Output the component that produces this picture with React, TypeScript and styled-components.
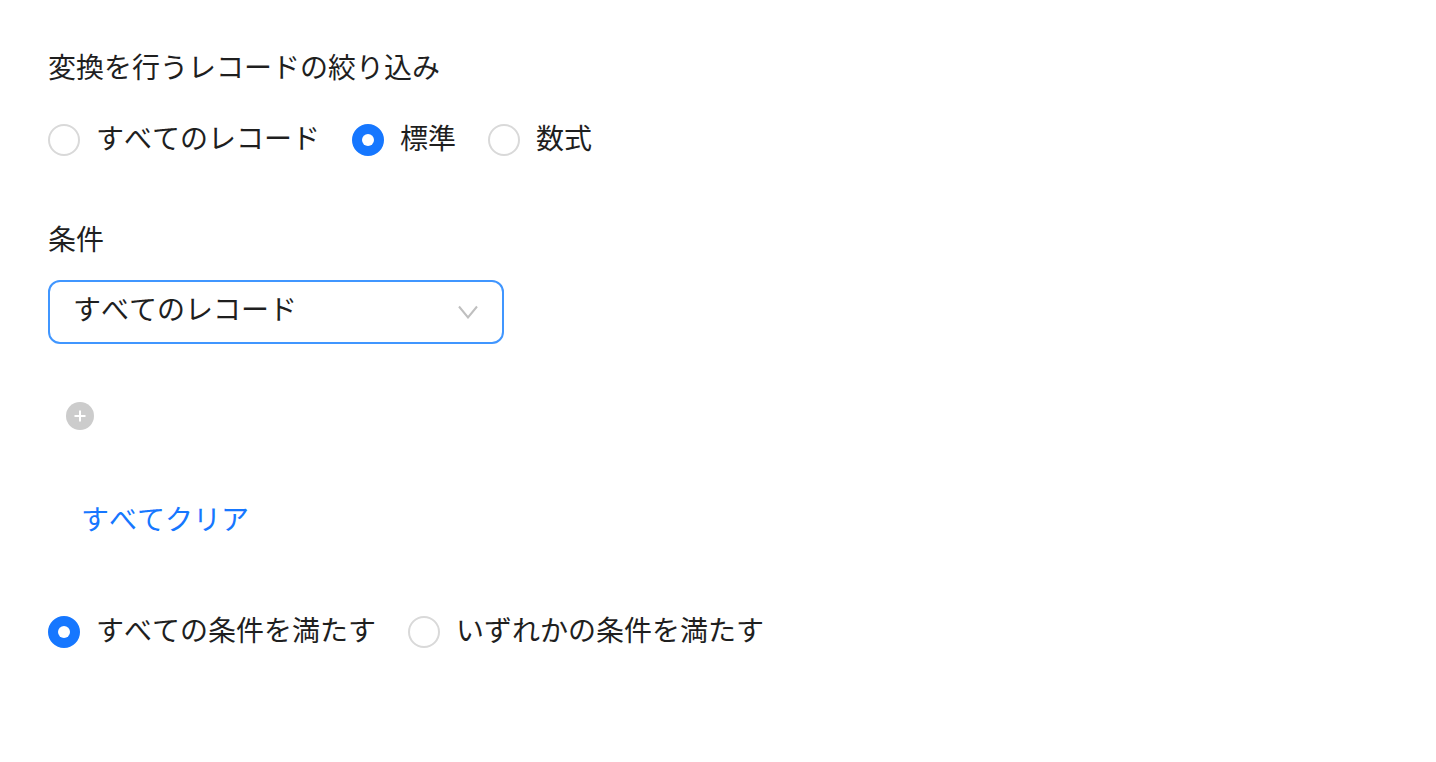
import React from 'react'
import styled, { createGlobalStyle } from 'styled-components'

const GlobalStyle = createGlobalStyle`
  html, body {
    margin: 0;
    padding: 0;
    background: #fff;
  }
  body {
    font-family: "Noto Sans CJK JP", "Liberation Sans", sans-serif;
    font-kerning: none;
    font-feature-settings: "palt" 0, "kern" 0;
    color: #1f1f1f;
    font-size: 28px;
  }
`

const Page = styled.div`
  display: flex;
  flex-direction: column;
  padding: 46px 48px 0;
`

const Title = styled.div`
  line-height: 40px;
  margin-bottom: 34px;
`

const RadioGroup = styled.div`
  display: flex;
  gap: 32px;
  height: 40px;
  align-items: center;
`

const RadioItem = styled.label`
  display: flex;
  align-items: center;
  gap: 16px;
  line-height: 40px;
`

const RadioText = styled.span`
  margin-bottom: 6px;
`

const RadioMark = styled.span<{ $checked?: boolean }>`
  box-sizing: border-box;
  width: 32px;
  height: 32px;
  border-radius: 50%;
  background: ${p => (p.$checked ? '#1677ff' : '#fff')};
  border: 2px solid ${p => (p.$checked ? '#1677ff' : '#d9d9d9')};
  display: flex;
  align-items: center;
  justify-content: center;

  &::after {
    content: '';
    display: ${p => (p.$checked ? 'block' : 'none')};
    width: 12px;
    height: 12px;
    border-radius: 50%;
    background: #fff;
  }
`

const Label = styled.div`
  line-height: 40px;
  margin-top: 58px;
  margin-bottom: 22px;
`

const Select = styled.div`
  box-sizing: border-box;
  width: 456px;
  height: 64px;
  padding: 0 24px 0 23px;
  border: 2px solid #4096ff;
  border-radius: 12px;
  display: flex;
  align-items: center;
  justify-content: space-between;
`

const SelectValue = styled.span`
  margin-bottom: 8px;
`

const AddButton = styled.button`
  width: 28px;
  height: 28px;
  padding: 0;
  border: none;
  border-radius: 50%;
  background: #cccccc;
  margin: 58px 0 0 18px;
  display: flex;
  align-items: center;
  justify-content: center;
`

const ClearLink = styled.a`
  color: #1677ff;
  line-height: 40px;
  margin: 68px 0 0 33px;
`

const BottomGroup = styled(RadioGroup)`
  margin-top: 74px;
`

export default function App() {
  return (
    <Page>
      <GlobalStyle />
      <Title>変換を行うレコードの絞り込み</Title>
      <RadioGroup>
        <RadioItem><RadioMark /><RadioText>すべてのレコード</RadioText></RadioItem>
        <RadioItem><RadioMark $checked /><RadioText>標準</RadioText></RadioItem>
        <RadioItem><RadioMark /><RadioText>数式</RadioText></RadioItem>
      </RadioGroup>
      <Label>条件</Label>
      <Select>
        <SelectValue>すべてのレコード</SelectValue>
        <svg width="20" height="14" viewBox="0 0 20 14" fill="none">
          <path d="M1 1.5 L10 12.5 L19 1.5" stroke="#bfbfbf" strokeWidth="2" />
        </svg>
      </Select>
      <AddButton>
        <svg width="12" height="12" viewBox="0 0 12 12">
          <path d="M6 0.5 V11.5 M0.5 6 H11.5" stroke="#fff" strokeWidth="2" />
        </svg>
      </AddButton>
      <ClearLink>すべてクリア</ClearLink>
      <BottomGroup>
        <RadioItem><RadioMark $checked /><RadioText>すべての条件を満たす</RadioText></RadioItem>
        <RadioItem><RadioMark /><RadioText>いずれかの条件を満たす</RadioText></RadioItem>
      </BottomGroup>
    </Page>
  )
}
